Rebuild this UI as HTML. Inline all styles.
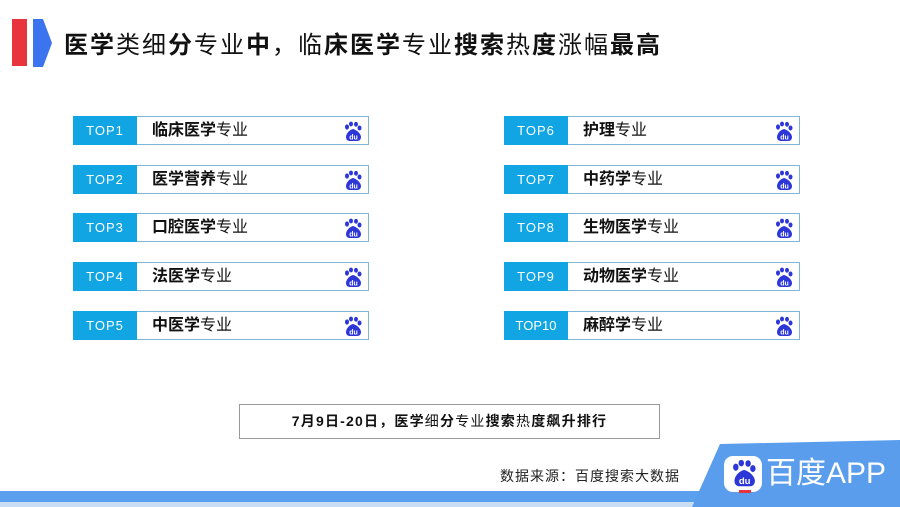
<!DOCTYPE html>
<html><head><meta charset="utf-8"><style>
body{margin:0;width:900px;height:507px;background:#fff;position:relative;overflow:hidden;font-family:"Liberation Sans","Noto Sans CJK SC",sans-serif;}
.a{position:absolute}
.row{position:absolute;width:296px;height:29px;border:1px solid #7fb6d6;box-sizing:border-box;background:#fff}
.row .l{position:absolute;left:-1px;top:-1px;width:64px;height:29px;background:#11a6e3;color:#fff;font-size:13px;line-height:29px;text-align:center;letter-spacing:1px}
.row .t{position:absolute;left:78px;top:0;line-height:27px;font-size:16px;color:#111}
.row svg{position:absolute;right:4px;top:4px}
b{font-weight:bold}
</style></head><body>
<div class="a" style="left:12px;top:19px;width:15px;height:47px;background:#e8353d"></div>
<svg class="a" style="left:33px;top:19px" width="20" height="48"><polygon points="0,0 10,0 19,24 10,48 0,48" fill="#3b74ee"/></svg>
<div class="a" style="left:64px;top:30px;font-size:24px;letter-spacing:2px;color:#111;line-height:32px;white-space:nowrap"><b>医学</b>类细<b>分</b>专业<b>中</b>，临<b>床医学</b>专业<b>搜索</b>热<b>度</b>涨幅<b>最高</b></div>

<svg width="0" height="0" style="position:absolute"><defs><g id="paw" fill="#2d37d8"><ellipse cx="5" cy="6" rx="2" ry="2.6"/><ellipse cx="9" cy="3" rx="2" ry="2.4"/><ellipse cx="14" cy="3.3" rx="2" ry="2.4"/><ellipse cx="17.5" cy="7" rx="2" ry="2.5"/><path d="M11 8 C7 9 4 13 4 16 C4 19 6 20 8 20 L15 20 C18 20 19 18 19 16 C19 13 15 9 11 8Z"/><text x="11.5" y="18.5" font-size="7" fill="#fff" text-anchor="middle" font-family="Liberation Sans" font-weight="bold">du</text></g></defs></svg>

<div class="row" style="left:73px;top:116px"><div class="l">TOP1</div><div class="t"><b>临床医学</b>专业</div><svg width="22" height="22"><use href="#paw"/></svg></div>
<div class="row" style="left:73px;top:165px"><div class="l">TOP2</div><div class="t"><b>医学营养</b>专业</div><svg width="22" height="22"><use href="#paw"/></svg></div>
<div class="row" style="left:73px;top:213px"><div class="l">TOP3</div><div class="t"><b>口腔医学</b>专业</div><svg width="22" height="22"><use href="#paw"/></svg></div>
<div class="row" style="left:73px;top:262px"><div class="l">TOP4</div><div class="t"><b>法医学</b>专业</div><svg width="22" height="22"><use href="#paw"/></svg></div>
<div class="row" style="left:73px;top:311px"><div class="l">TOP5</div><div class="t"><b>中医学</b>专业</div><svg width="22" height="22"><use href="#paw"/></svg></div>

<div class="row" style="left:504px;top:116px"><div class="l">TOP6</div><div class="t"><b>护理</b>专业</div><svg width="22" height="22"><use href="#paw"/></svg></div>
<div class="row" style="left:504px;top:165px"><div class="l">TOP7</div><div class="t"><b>中药学</b>专业</div><svg width="22" height="22"><use href="#paw"/></svg></div>
<div class="row" style="left:504px;top:213px"><div class="l">TOP8</div><div class="t"><b>生物医学</b>专业</div><svg width="22" height="22"><use href="#paw"/></svg></div>
<div class="row" style="left:504px;top:262px"><div class="l">TOP9</div><div class="t"><b>动物医学</b>专业</div><svg width="22" height="22"><use href="#paw"/></svg></div>
<div class="row" style="left:504px;top:311px"><div class="l" style="letter-spacing:0">TOP10</div><div class="t"><b>麻醉学</b>专业</div><svg width="22" height="22"><use href="#paw"/></svg></div>

<div class="a" style="left:239px;top:404px;width:421px;height:35px;border:1px solid #999;box-sizing:border-box;text-align:center;line-height:33px;font-size:14px;letter-spacing:1.2px;color:#111"><b>7月9日-20日，医学</b>细<b>分</b>专业<b>搜索</b>热<b>度飙升排行</b></div>
<div class="a" style="left:500px;top:466px;font-size:14px;color:#222;letter-spacing:1px">数据来源：百度搜索大数据</div>

<svg class="a" style="left:0;top:440px" width="900" height="67"><rect x="0" y="51" width="720" height="11" fill="#5aa0ee"/><rect x="0" y="62" width="720" height="5" fill="#c9def5"/><polygon points="720,4 900,0 900,67 692,67" fill="#5b9ded"/></svg>
<div class="a" style="left:724px;top:456px;width:38px;height:36px;background:#fff;border-radius:9px"></div>
<svg class="a" style="left:729px;top:459px" width="30" height="30" viewBox="0 0 22 22"><use href="#paw"/></svg>
<div class="a" style="left:739px;top:490px;width:12px;height:3px;background:#e8353d"></div>
<div class="a" style="left:766px;top:456px;font-size:30px;color:#fff;line-height:36px">百度APP</div>
</body></html>
